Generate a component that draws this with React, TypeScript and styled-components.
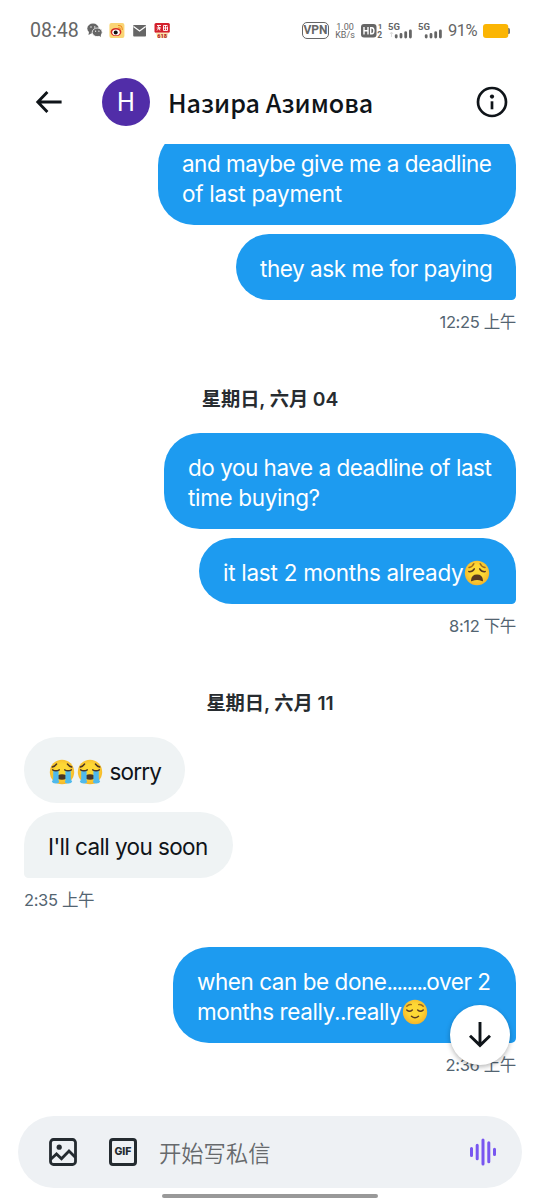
import React from 'react';
import styled, { createGlobalStyle } from 'styled-components';

const GlobalStyle = createGlobalStyle`
  *, *::before, *::after { box-sizing: border-box; }
  body { margin: 0; background: #fff; }
`;

const latin = `Inter, "Noto Sans CJK SC", sans-serif`;

const Screen = styled.div`
  position: relative;
  width: 540px;
  height: 1200px;
  display: flex;
  flex-direction: column;
  overflow: hidden;
  background: #fff;
  color: #0f1419;
  font-family: ${latin};
`;

const StatusBar = styled.div`
  height: 60px;
  flex: none;
  display: flex;
  align-items: center;
  justify-content: space-between;
  padding: 1px 29px 0 30px;
  color: #666;
`;

const StatusGroup = styled.div<{ $gap?: number }>`
  display: flex;
  align-items: center;
  gap: ${p => p.$gap ?? 0}px;
  svg { display: block; flex: none; }
`;

const StatusText = styled.span<{ $size: number; $w: number; $ls?: number }>`
  display: block;
  width: ${p => p.$w}px;
  font-family: Roboto, sans-serif;
  font-size: ${p => p.$size}px;
  letter-spacing: ${p => p.$ls ?? 0}px;
  line-height: 24px;
  white-space: nowrap;
`;

const VpnBadge = styled.span`
  width: 27px;
  height: 17px;
  border: 1.6px solid #666;
  border-radius: 5px;
  font: 700 12px/15px Roboto, sans-serif;
  display: flex;
  justify-content: center;
`;

const Speed = styled.span`
  width: 20px;
  margin: 0 2px;
  display: flex;
  flex-direction: column;
  align-items: center;
  white-space: nowrap;
  font: 400 9px/8px Roboto, sans-serif;
`;

const Header = styled.header`
  height: 84px;
  flex: none;
  display: flex;
  align-items: center;
  padding: 0 31px 0 33px;
  svg { display: block; flex: none; }
`;

const Avatar = styled.div`
  width: 48px;
  height: 48px;
  margin-left: 39px;
  border-radius: 50%;
  background: #512da8;
  color: #fff;
  font: 400 25px/50px Roboto, sans-serif;
  text-align: center;
`;

const Title = styled.h1`
  flex: 1;
  margin: 0 0 0 18px;
  font: 500 25.1px/36px "Noto Sans CJK SC", sans-serif;
  white-space: nowrap;
`;

const Messages = styled.main`
  flex: 1;
  min-height: 0;
  overflow: hidden;
  padding: 0 24px;
  display: flex;
  flex-direction: column;
`;

const Group = styled.section<{ $mine?: boolean; $pull?: number }>`
  display: flex;
  flex: none;
  flex-direction: column;
  align-items: ${p => (p.$mine ? 'flex-end' : 'flex-start')};
  gap: 9px;
  margin-top: ${p => p.$pull ?? 0}px;
`;

const Bubble = styled.div<{ $mine?: boolean; $tail?: boolean; $w: number }>`
  width: ${p => p.$w}px;
  padding: 20px 24px 16px;
  border-radius: 36px;
  ${p => p.$tail && (p.$mine ? 'border-bottom-right-radius: 5px;' : 'border-bottom-left-radius: 5px;')}
  background: ${p => (p.$mine ? '#1d9bf0' : '#eff3f4')};
  color: ${p => (p.$mine ? '#fff' : '#0f1419')};
`;

const Line = styled.div<{ $ls?: number }>`
  display: flex;
  align-items: center;
  height: 30px;
  font-size: 22.5px;
  line-height: 30px;
  letter-spacing: ${p => p.$ls ?? 0}px;
  white-space: pre;
  svg { display: block; flex: none; }
`;

const Time = styled.div`
  height: 24px;
  margin-top: 1px;
  font-size: 16.5px;
  line-height: 24px;
  letter-spacing: -0.35px;
  color: #536471;
`;

const DateLabel = styled.div`
  flex: none;
  height: 30px;
  margin: 49px 0 20px;
  text-align: center;
  font-size: 19.3px;
  font-weight: 600;
  line-height: 32px;
  letter-spacing: -0.1px;
  color: #272c30;
`;

const ScrollDown = styled.button`
  position: absolute;
  left: 450px;
  top: 1005px;
  width: 60px;
  height: 60px;
  padding: 0;
  border: 0;
  border-radius: 50%;
  background: #fff;
  box-shadow: 0 2px 5px rgba(0, 0, 0, 0.28);
  display: flex;
  align-items: center;
  justify-content: center;
`;

const Composer = styled.footer`
  flex: none;
  height: 72px;
  margin: 0 18px;
  padding: 0 25px 0 31px;
  border-radius: 36px;
  background: #eef1f4;
  display: flex;
  align-items: center;
  svg { display: block; flex: none; }
`;

const GifIcon = styled.div`
  width: 28px;
  height: 28px;
  margin: 0 22px 0 32px;
  border: 3px solid #242b30;
  border-radius: 4px;
  color: #242b30;
  font: 800 10.5px/22px Inter, sans-serif;
  display: flex;
  justify-content: center;
`;

const Placeholder = styled.span`
  flex: 1;
  font: 350 22.3px/32px "Noto Sans CJK SC", sans-serif;
  color: #66696c;
`;

const HomeIndicator = styled.div`
  flex: none;
  width: 216px;
  height: 4px;
  margin: 6px auto 2px;
  border-radius: 2px;
  background: #999;
`;

type Mood = 'weary' | 'sob' | 'relieved';

const Emoji = ({ mood }: { mood: Mood }) => (
  <svg width="28" height="28" viewBox="0 0 28 28" role="img" aria-label={mood}>
    <defs>
      <radialGradient id={`face-${mood}`} cx="50%" cy="45%" r="55%">
        <stop offset="0.5" stopColor="#fdd835" />
        <stop offset="1" stopColor="#f5b52a" />
      </radialGradient>
    </defs>
    <circle cx="14" cy="14" r="12.2" fill={`url(#face-${mood})`} />
    {mood === 'weary' && (
      <g fill="none" stroke="#5a3a22" strokeWidth="1.5" strokeLinecap="round">
        <path d="M6 8.5Q9.5 8 10.8 4.8M22 8.5Q18.5 8 17.2 4.8" stroke="#9b6a1e" />
        <path d="M5.8 12.6Q9.5 13 11.3 9.8M22.2 12.6Q18.5 13 16.7 9.8" />
        <path d="M8 21.5Q8.5 15.6 14 15.6T20 21.5Q20 22.7 18.8 22Q14 19.8 9.2 22Q8 22.7 8 21.5Z" fill="#5a3a22" stroke="none" />
      </g>
    )}
    {mood === 'sob' && (
      <>
        <path d="M9.5 17.5Q14 15.2 18.5 17.5V20.5Q14 23 9.5 20.5Z" fill="#4a3524" />
        <path d="M5.2 12.2H10.6V22.8Q12 25 9 25.5Q4.5 26 3.8 23.5Q5.2 22 5.2 20ZM22.8 12.2H17.4V22.8Q16 25 19 25.5Q23.5 26 24.2 23.5Q22.8 22 22.8 20Z" fill="#4fb9ec" />
        <path d="M4.6 11.8Q8 13.8 11.3 11.8M23.4 11.8Q20 13.8 16.7 11.8M4.3 9Q7 8.2 8.6 6M23.7 9Q21 8.2 19.4 6" fill="none" stroke="#4a3524" strokeWidth="1.4" strokeLinecap="round" />
      </>
    )}
    {mood === 'relieved' && (
      <g fill="none" stroke="#5a3a22" strokeWidth="1.5" strokeLinecap="round">
        <path d="M5.8 12Q8.5 14.6 11.3 12M16.7 12Q19.5 14.6 22.2 12M10.5 18.2Q14 21.4 17.5 18.2" />
        <path d="M5.8 8.2Q8 5.8 10.3 6.6M22.2 8.2Q20 5.8 17.7 6.6" stroke="#9b6a1e" />
      </g>
    )}
  </svg>
);

const Signal = ({ weak }: { weak?: boolean }) => (
  <svg width="26" height="18" viewBox="0 0 26 18">
    <text x="0" y="7.5" fontFamily="Roboto" fontWeight="700" fontSize="9.5" fill="#666">5G</text>
    {weak && <path d="M3.5 10v5M2 12l1.5-2L5 12" stroke="#ddd" fill="none" />}
    <path d="M8.2 13.6v1.4M13 12.4v2.6M17.7 10.6v4.4M22.4 8.8v6.2" stroke="#666" strokeWidth="2.8" strokeLinecap="round" />
  </svg>
);

const StatusIcons = () => (
  <svg width="84" height="18" viewBox="0 0 84 18">
    <ellipse cx="6" cy="6.5" rx="5.7" ry="4.9" fill="#666" />
    <path d="M2 9.5L1.5 13 5 11Z" fill="#666" />
    <ellipse cx="10.2" cy="10.3" rx="5" ry="4.3" fill="#666" stroke="#fff" strokeWidth=".8" />
    <path d="M11 13l3 2-.4-3Z" fill="#666" />
    <g fill="#fff"><circle cx="4" cy="5" r=".7" /><circle cx="7.8" cy="5" r=".7" /><circle cx="8.6" cy="9.2" r=".6" /><circle cx="11.9" cy="9.2" r=".6" /></g>
    <rect x="22.4" y="1" width="15" height="15" rx="2" fill="#fad575" />
    <ellipse cx="29" cy="10" rx="5.4" ry="4.1" fill="#d62b23" />
    <ellipse cx="29" cy="10.4" rx="3.8" ry="2.8" fill="#fff" />
    <circle cx="28.7" cy="10.4" r="2" fill="#111" />
    <path d="M31 3.5Q35.5 3 35.3 8M31.3 5.7Q33.5 5.5 33.2 7.7" fill="none" stroke="#ee8b25" strokeWidth="1.1" />
    <rect x="46.2" y="3" width="12.8" height="11.6" rx=".8" fill="#666" />
    <path d="M46.5 4.4L52.6 9 58.7 4.4" fill="none" stroke="#fff" strokeWidth="1.2" />
    <rect x="67.5" y="1" width="15.3" height="9.8" rx="1.5" fill="#d3202c" />
    <path d="M70 3.5h4M69.7 6h4.3M71 3.5l2 5M73 5l-3 3.5M76.5 3.5h4M76 6h5M76.5 3.5v5h4v-4M78.5 3v5" fill="none" stroke="#fff" strokeWidth=".9" />
    <path d="M69 10.8h12.5L80 16h-9.5Z" fill="#fbe5ad" />
    <text x="75.2" y="15.8" textAnchor="middle" fontFamily="Roboto" fontWeight="900" fontSize="5.6" fill="#b51b22">618</text>
  </svg>
);

export default function App() {
  return (
    <Screen>
      <GlobalStyle />
      <StatusBar>
        <StatusGroup>
          <StatusText $size={19.6} $w={57}>08:48</StatusText>
          <StatusIcons />
        </StatusGroup>
        <StatusGroup $gap={4}>
          <VpnBadge>VPN</VpnBadge>
          <Speed><span>1.00</span><span>KB/s</span></Speed>
          <svg width="23" height="17" viewBox="0 0 23 17">
            <rect x="0" y="2" width="15.5" height="13.5" rx="3" fill="#666" />
            <path d="M3 5v7.5M7 5v7.5M3 8.8h4M9.7 5.7v6.1h1.2q2 0 2-3t-2-3.1Z" fill="none" stroke="#fff" strokeWidth="1.4" />
            <text x="16.7" y="7" fontFamily="Roboto" fontWeight="700" fontSize="8" fill="#666">1</text>
            <text x="16.3" y="16" fontFamily="Roboto" fontWeight="700" fontSize="8.5" fill="#666">2</text>
          </svg>
          <Signal weak />
          <Signal />
          <StatusText $size={16.5} $w={31} $ls={-0.5}>91%</StatusText>
          <svg width="28" height="14" viewBox="0 0 28 14">
            <path d="M24 4h1.5q1.5 0 1.5 1.5v3q0 1.5-1.5 1.5H24Z" fill="#777" />
            <rect x="0" y="0" width="25.3" height="14" rx="3" fill="#fbb504" />
          </svg>
        </StatusGroup>
      </StatusBar>

      <Header>
        <svg width="30" height="30" viewBox="0 0 30 30" fill="none" stroke="#0f1419" strokeWidth="2.9">
          <path d="M28.6 15H5M14.4 5L4.8 15l9.6 10" />
        </svg>
        <Avatar>Н</Avatar>
        <Title>Назира Азимова</Title>
        <svg width="34" height="34" viewBox="0 0 34 34">
          <circle cx="17" cy="17" r="14" fill="none" stroke="#0f1419" strokeWidth="2.7" />
          <circle cx="17" cy="11.6" r="2.1" fill="#0f1419" />
          <path d="M17 16.3v8" stroke="#0f1419" strokeWidth="2.7" />
        </svg>
      </Header>

      <Messages>
        <Group $mine $pull={-15}>
          <Bubble $mine $w={358}>
            <Line $ls={-0.52}>and maybe give me a deadline</Line>
            <Line $ls={-0.3}>of last payment</Line>
          </Bubble>
          <Bubble $mine $tail $w={280}><Line $ls={-0.44}>they ask me for paying</Line></Bubble>
          <Time>12:25 上午</Time>
        </Group>
        <DateLabel>星期日, 六月 04</DateLabel>
        <Group $mine>
          <Bubble $mine $w={352}>
            <Line $ls={-0.48}>do you have a deadline of last</Line>
            <Line $ls={-0.33}>time buying?</Line>
          </Bubble>
          <Bubble $mine $tail $w={317}><Line $ls={-0.27}>it last 2 months already<Emoji mood="weary" /></Line></Bubble>
          <Time>8:12 下午</Time>
        </Group>
        <DateLabel>星期日, 六月 11</DateLabel>
        <Group>
          <Bubble $w={161}><Line $ls={-0.8}><Emoji mood="sob" /><Emoji mood="sob" /> sorry</Line></Bubble>
          <Bubble $tail $w={209}><Line $ls={-0.6}>I'll call you soon</Line></Bubble>
          <Time>2:35 上午</Time>
        </Group>
        <Group $mine $pull={35}>
          <Bubble $mine $tail $w={343}>
            <Line $ls={-0.45}>when can be done<Line as="span" $ls={-1.5}>........</Line>over 2</Line>
            <Line $ls={-0.4}>months really..really<Emoji mood="relieved" /></Line>
          </Bubble>
          <Time>2:36 上午</Time>
        </Group>
      </Messages>

      <ScrollDown aria-label="Scroll to latest">
        <svg width="30" height="30" viewBox="0 0 30 30" fill="none" stroke="#0f1419" strokeWidth="2.9">
          <path d="M15 2v24M5 15.8l10 9.6 10-9.6" />
        </svg>
      </ScrollDown>

      <Composer>
        <svg width="28" height="28" viewBox="0 0 28 28" fill="none" stroke="#242b30" strokeWidth="2.8">
          <rect x="1.5" y="1.5" width="25" height="25" rx="3" />
          <path d="M1.5 21.5l6-5.5 5 4.8 7.5-7.8 6.5 6.5" />
          <circle cx="10.2" cy="9.2" r="2.6" fill="#242b30" stroke="none" />
        </svg>
        <GifIcon>GIF</GifIcon>
        <Placeholder>开始写私信</Placeholder>
        <svg width="28" height="30" viewBox="0 0 28 30" stroke="#7856f0" strokeWidth="3" strokeLinecap="round">
          <path d="M2.5 11.5v7M8.2 8.3v13.5M14 3v24M19.8 5.8v19M25.5 12.2v5.4" />
        </svg>
      </Composer>
      <HomeIndicator />
    </Screen>
  );
}
